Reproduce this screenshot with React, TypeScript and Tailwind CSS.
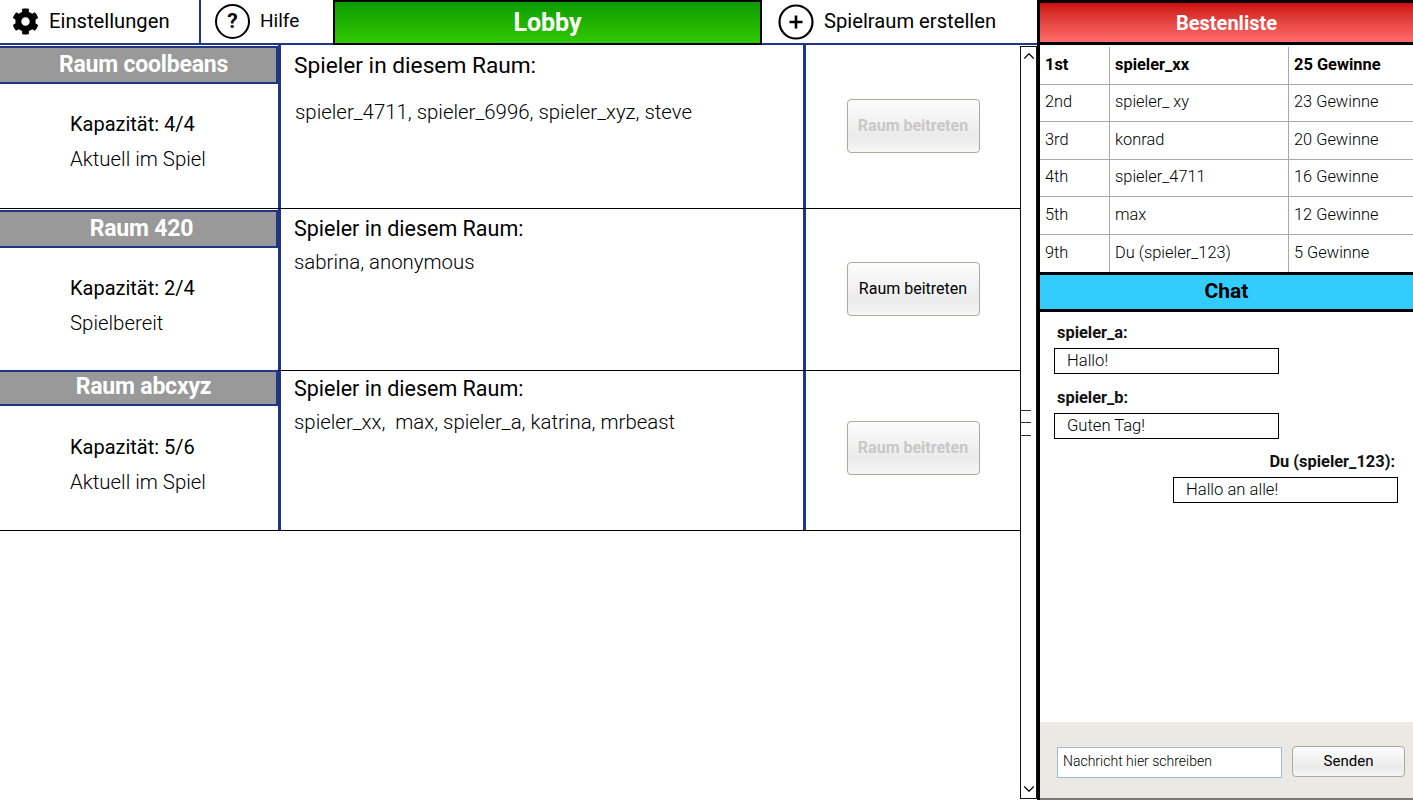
import { FaCog } from "react-icons/fa";
import { ChevronUp, ChevronDown } from "lucide-react";

const rooms = [
  {
    name: "Raum coolbeans",
    capacity: "Kapazität: 4/4",
    status: "Aktuell im Spiel",
    players: "spieler_4711, spieler_6996, spieler_xyz, steve",
    disabled: true,
    rowClass: "h-[164px]",
    headClass: "h-[38px] mt-px pl-[11px]",
    infoClass: "pt-[23px]",
    titleClass: "text-[22.7px] pt-[6px]",
    playersClass: "pt-[16px] pl-px",
    buttonClass: "pb-[2px]",
  },
  {
    name: "Raum 420",
    capacity: "Kapazität: 2/4",
    status: "Spielbereit",
    players: "sabrina, anonymous",
    disabled: false,
    rowClass: "h-[162px]",
    headClass: "h-[38px] mt-px pl-[7px]",
    infoClass: "pt-[23px]",
    titleClass: "text-[21.5px] pt-[5px]",
    playersClass: "pt-[3px]",
    buttonClass: "pb-px",
  },
  {
    name: "Raum abcxyz",
    capacity: "Kapazität: 5/6",
    status: "Aktuell im Spiel",
    players: "spieler_xx,  max, spieler_a, katrina, mrbeast",
    disabled: true,
    rowClass: "h-[160px]",
    headClass: "h-[36px] -mt-px pl-[11px] pb-[2px]",
    infoClass: "pt-[24px]",
    titleClass: "text-[21.5px] pt-[3px]",
    playersClass: "pt-[3px]",
    buttonClass: "pb-[6px]",
  },
];

const scores = [
  ["1st", "spieler_xx", "25 Gewinne"],
  ["2nd", "spieler_ xy", "23 Gewinne"],
  ["3rd", "konrad", "20 Gewinne"],
  ["4th", "spieler_4711", "16 Gewinne"],
  ["5th", "max", "12 Gewinne"],
  ["9th", "Du (spieler_123)", "5 Gewinne"],
];

const btnGradient = "bg-gradient-to-b from-[#fdfdfd] via-[#ebebeb] via-70% to-[#f6f6f6]";

function Room({ room }: { room: (typeof rooms)[number] }) {
  return (
    <div className={`flex border-b border-black ${room.rowClass}`}>
      <div className="w-[281px] shrink-0 border-r-[3px] border-[#1f3587]">
        <div
          className={`bg-[#999999] border-y-2 border-r-2 border-[#1f3587] flex items-center justify-center text-[23px] font-bold text-white tracking-[-0.2px] ${room.headClass}`}
        >
          {room.name}
        </div>
        <div className={`pl-[70px] ${room.infoClass}`}>
          <div className="text-[20px] leading-[35px] font-[450] text-black">{room.capacity}</div>
          <div className="text-[20.4px] leading-[35px] font-light text-black">{room.status}</div>
        </div>
      </div>
      <div className="w-[525px] shrink-0 border-r-[3px] border-[#1f3587] pl-[13px]">
        <div className={`text-black leading-[30px] ${room.titleClass}`}>Spieler in diesem Raum:</div>
        <div className={`text-[20.4px] font-light text-black whitespace-pre ${room.playersClass}`}>
          {room.players}
        </div>
      </div>
      <div className={`flex-1 flex items-center justify-center ${room.buttonClass}`}>
        <button
          className={`w-[133px] h-[54px] rounded border border-[#b0a898] text-[16px] ${btnGradient} ${
            room.disabled ? "font-bold text-[#c8c8c8]" : "font-normal text-black"
          }`}
        >
          Raum beitreten
        </button>
      </div>
    </div>
  );
}

function Message({ name, text, right }: { name: string; text: string; right?: boolean }) {
  return (
    <div className={right ? "flex flex-col items-end pr-[15px] -mt-px" : "flex flex-col items-start pl-[14px]"}>
      <div className={`text-[16.4px] font-bold text-[#111] leading-[20px] ${right ? "pr-[3px]" : "pl-[3px]"}`}>
        {name}
      </div>
      <div className="w-[225px] h-[26px] mt-[5px] border border-black pl-[12px] text-[16.6px] font-light leading-[24px] text-black">
        {text}
      </div>
    </div>
  );
}

export default function App() {
  return (
    <div className="w-[1413px] h-[800px] overflow-hidden bg-white flex flex-col font-['Roboto',sans-serif]">
      <div className="flex h-[45px] shrink-0">
        <div className="flex w-[1037px] border-b-2 border-[#1f3587] text-[20.2px] text-black">
          <div className="w-[201px] border-r-2 border-[#1f3587] flex items-center pl-[12px] gap-[10px]">
            <FaCog className="text-[27px]" />
            <span>Einstellungen</span>
          </div>
          <div className="w-[132px] flex items-center pl-[14px] gap-[10px]">
            <div className="w-[35px] h-[35px] rounded-full border-2 border-black flex items-center justify-center text-[21px] font-bold leading-none">
              ?
            </div>
            <span className="text-[19px]">Hilfe</span>
          </div>
          <div className="w-[429px] h-[45px] border-2 border-black bg-gradient-to-b from-[#0a9c00] to-[#2fc900] flex items-center justify-center text-[25px] font-bold text-white">
            Lobby
          </div>
          <div className="flex-1 flex items-center pl-[16px] gap-[10px]">
            <svg width="36" height="36" viewBox="0 0 36 36" fill="none" stroke="black">
              <circle cx="18" cy="18" r="16.5" strokeWidth="2.2" />
              <path d="M18 11.5V24.5M11.5 18H24.5" strokeWidth="2.6" />
            </svg>
            <span>Spielraum erstellen</span>
          </div>
        </div>
        <div className="flex-1 border-[3px] border-r-0 border-black bg-gradient-to-b from-[#cc0808] to-[#ff6b6b] flex items-center justify-center text-[20px] font-bold text-white">
          Bestenliste
        </div>
      </div>

      <div className="flex flex-1 min-h-0">
        <div className="w-[1020px] shrink-0">
          {rooms.map((room) => (
            <Room key={room.name} room={room} />
          ))}
        </div>

        <div className="w-[17px] shrink-0 mt-px mb-px border border-[#111] flex flex-col items-center justify-between">
          <ChevronUp size={18} strokeWidth={1.5} className="text-black" />
          <div className="flex flex-col gap-[11.5px] w-[10px] self-start">
            <div className="h-px bg-[#333]" />
            <div className="h-px bg-[#333]" />
            <div className="h-px bg-[#333]" />
          </div>
          <ChevronDown size={18} strokeWidth={1.5} className="text-black" />
        </div>

        <div className="flex-1 border-l-[3px] border-black flex flex-col">
          <div className="shrink-0 mt-[2px]">
            {scores.map((row, i) => (
              <div
                key={row[0]}
                className={`flex h-[37.5px] items-center text-[16.4px] text-black border-b border-[#a8a8a8] last:border-b-0 ${
                  i === 0 ? "font-bold" : "font-light"
                }`}
              >
                <div className="w-[70px] h-full flex items-center pl-[5px] border-r border-[#a8a8a8]">{row[0]}</div>
                <div className="w-[179px] h-full flex items-center pl-[5px] border-r border-[#a8a8a8]">{row[1]}</div>
                <div className="flex-1 pl-[5px]">{row[2]}</div>
              </div>
            ))}
          </div>
          <div className="h-[40px] shrink-0 border-y-[3px] border-black bg-[#33ccff] flex items-center justify-center text-[21px] font-bold text-black">
            Chat
          </div>
          <div className="flex-1 flex flex-col gap-[14px] pt-[11px]">
            <Message name="spieler_a:" text="Hallo!" />
            <Message name="spieler_b:" text="Guten Tag!" />
            <Message name="Du (spieler_123):" text="Hallo an alle!" right />
          </div>
          <div className="h-[78px] shrink-0 bg-[#ebe9e3] border-b-2 border-[#777] flex items-start pt-[24px] pl-[17px] gap-[10px]">
            <input
              readOnly
              value="Nachricht hier schreiben"
              className="w-[225px] h-[31px] mt-px pb-[3px] bg-white border border-[#9dbccf] px-[5px] text-[14px] font-light text-black outline-none"
            />
            <button className={`w-[113px] h-[31px] rounded border border-[#b0a898] text-[15px] text-black ${btnGradient}`}>
              Senden
            </button>
          </div>
        </div>
      </div>
    </div>
  );
}
